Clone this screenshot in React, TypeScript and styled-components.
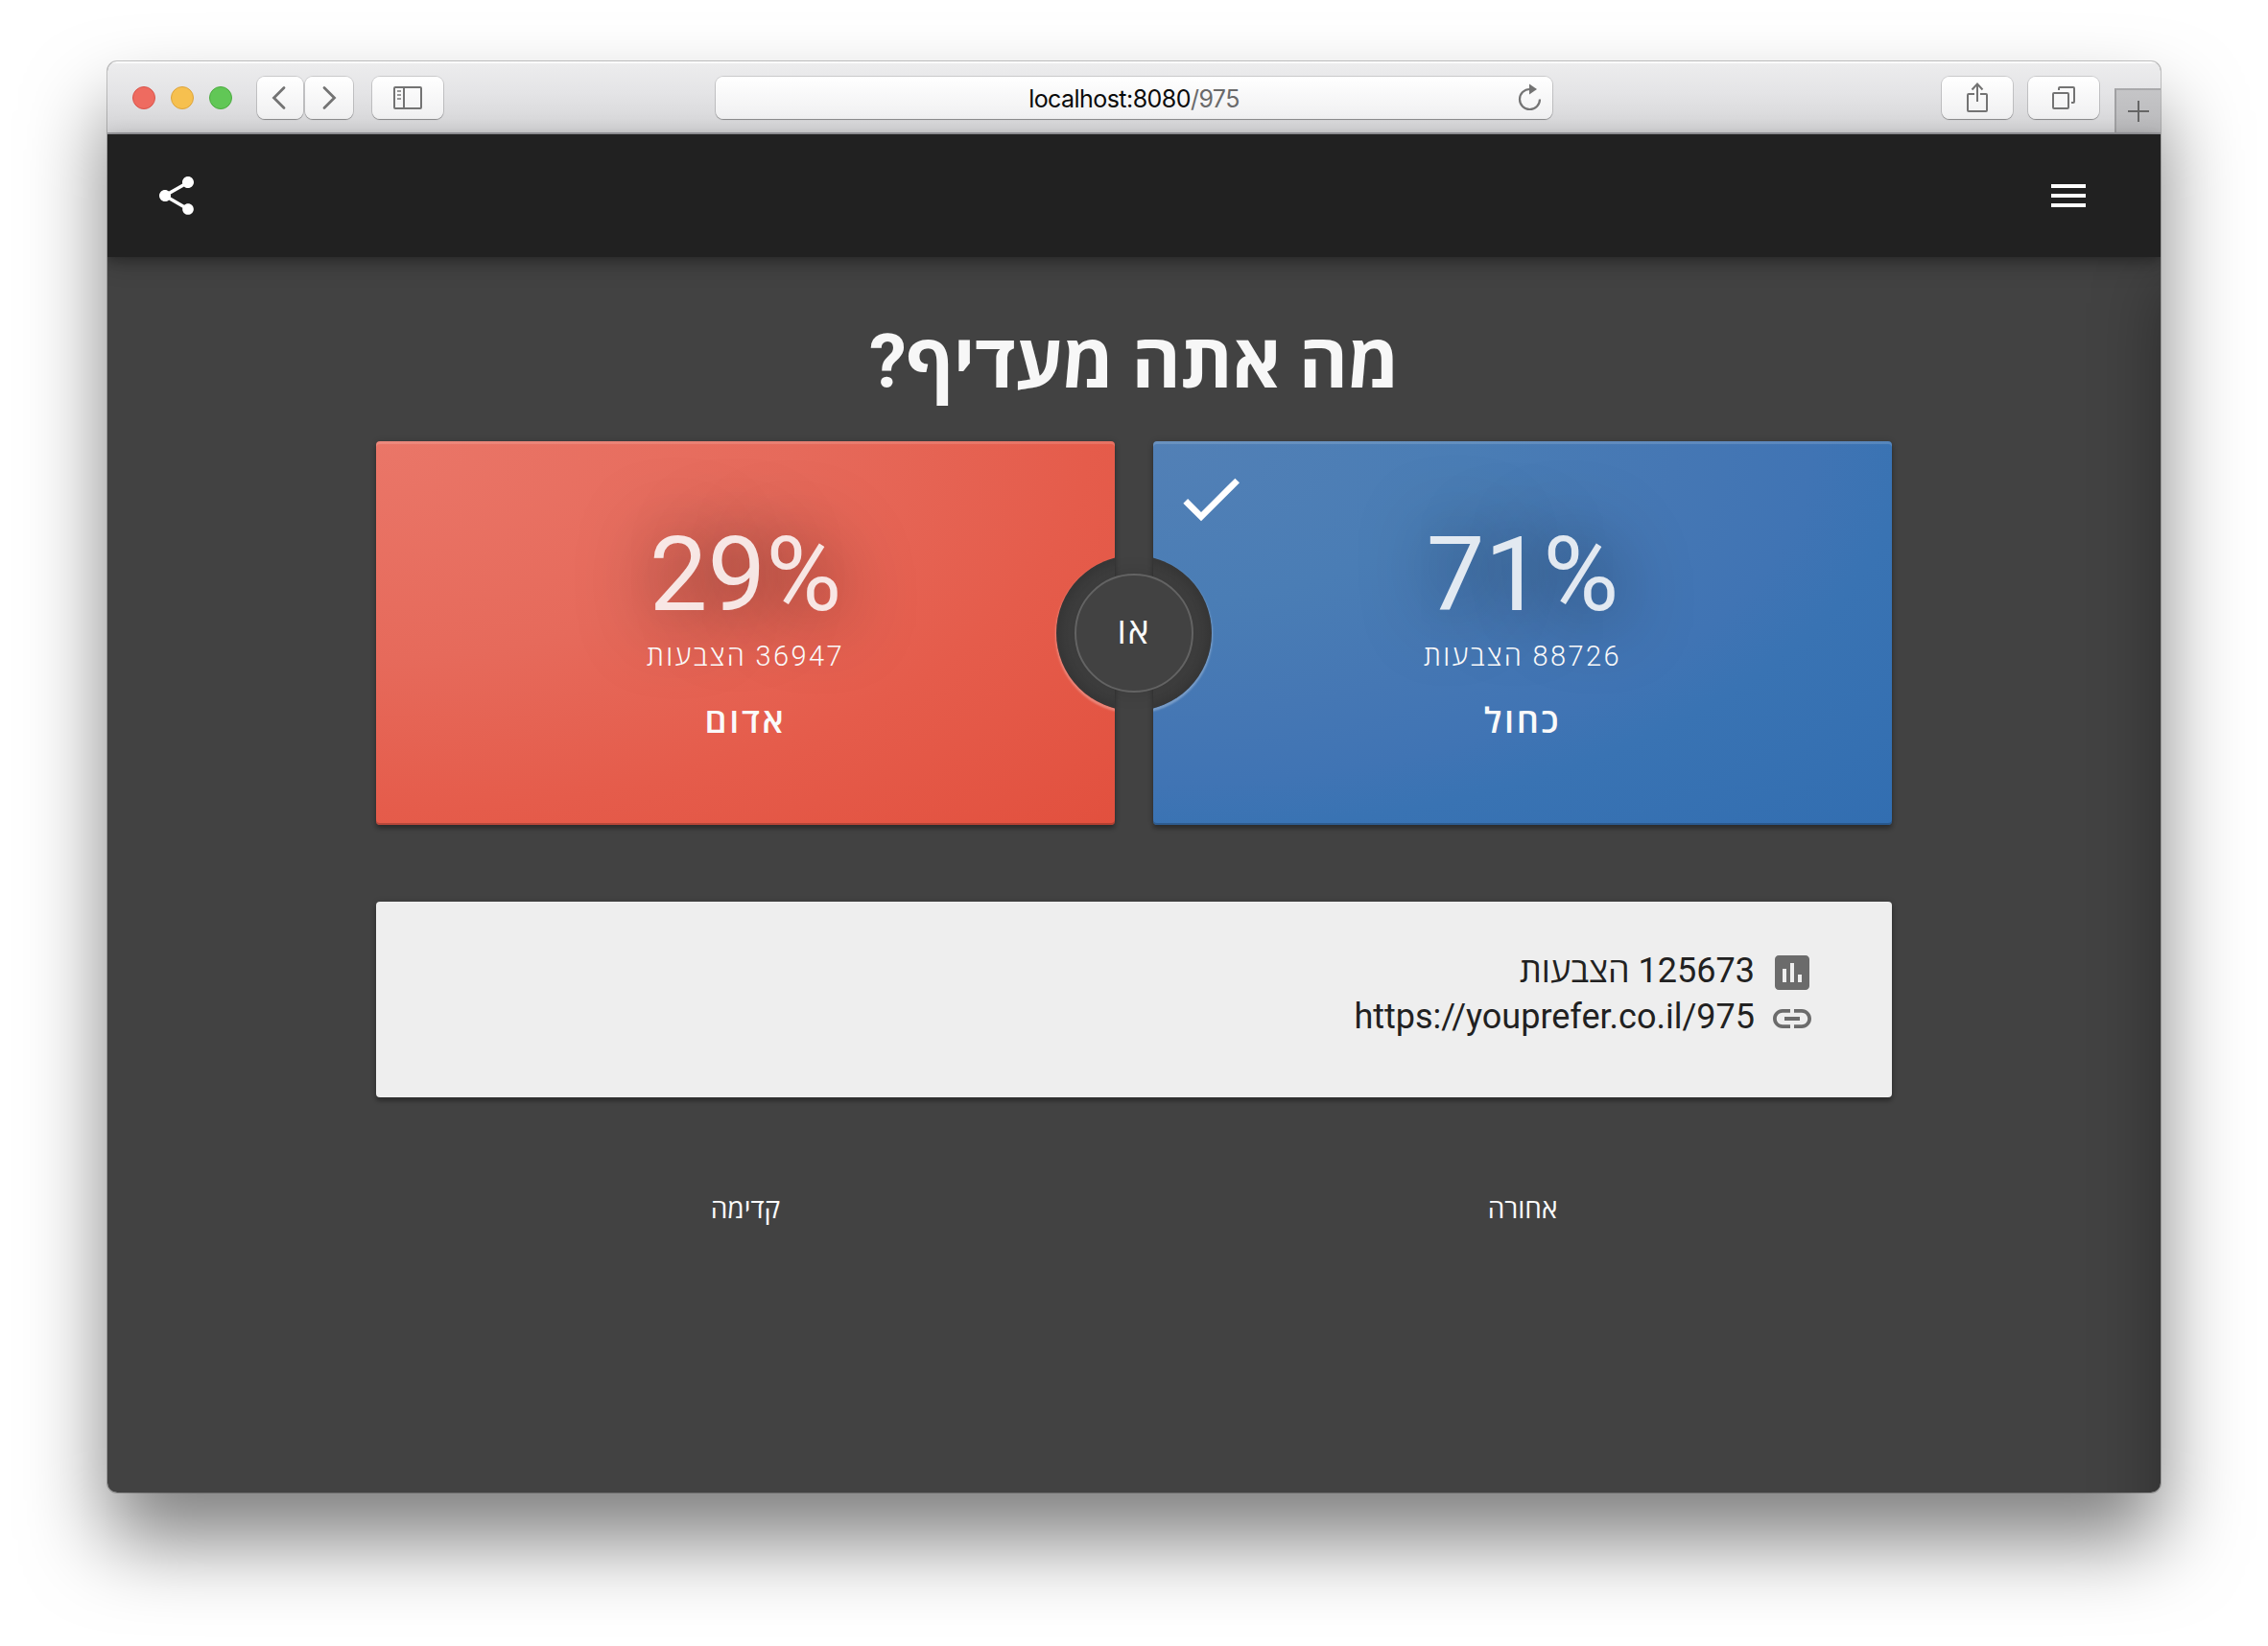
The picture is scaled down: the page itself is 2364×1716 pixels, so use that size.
import React from 'react';
import styled, { createGlobalStyle } from 'styled-components';
import { MdCheck, MdLink, MdMenu, MdPoll, MdShare } from 'react-icons/md';

const GlobalStyle = createGlobalStyle`
  html, body { margin: 0; padding: 0; background: #fff; }
  * { box-sizing: border-box; }
`;

const Desktop = styled.div`
  width: 2364px;
  height: 1716px;
  padding: 64px 112px 160px;
  overflow: hidden;
  background: #fff;
  font-family: Roboto, 'Open Sans', 'Liberation Sans', sans-serif;
`;

const Window = styled.div`
  width: 2140px;
  height: 1492px;
  border-radius: 10px;
  box-shadow: 0 0 0 1px rgba(0, 0, 0, 0.22), 0 50px 84px rgba(0, 0, 0, 0.5);
`;

const WindowBody = styled.div`
  position: relative;
  height: 100%;
  display: flex;
  flex-direction: column;
  border-radius: 10px;
  overflow: hidden;
  background: #424242;
`;

const Toolbar = styled.div`
  flex: none;
  height: 76px;
  display: flex;
  align-items: flex-start;
  padding-left: 26px;
  background: linear-gradient(#ededee, #e4e4e6 45%, #d4d4d6);
  border-bottom: 2px solid #9d9da1;
  box-shadow: inset 0 2px 1px rgba(255, 255, 255, 0.8);
`;

const Lights = styled.div`
  display: flex;
  gap: 16px;
  margin-top: 26px;
`;

const Light = styled.span<{ $fill: string; $edge: string }>`
  width: 24px;
  height: 24px;
  border-radius: 50%;
  background: ${(p) => p.$fill};
  border: 1px solid ${(p) => p.$edge};
`;

const ToolButton = styled.div<{ $width: number; $gap?: number }>`
  flex: none;
  width: ${(p) => p.$width}px;
  height: 44px;
  margin: 16px 0 0 ${(p) => p.$gap ?? 0}px;
  display: flex;
  align-items: center;
  justify-content: center;
  border-radius: 8px;
  background: linear-gradient(#fff, #f0f0f1);
  box-shadow: 0 0 0 1px rgba(0, 0, 0, 0.13), 0 1px 1px rgba(0, 0, 0, 0.28);
`;

const AddressBar = styled(ToolButton)`
  position: relative;
  padding-top: 2px;
  font-family: Inter, sans-serif;
  font-size: 25px;
  line-height: 42px;
  letter-spacing: -0.55px;
  color: #0a0a0a;
`;

const UrlPath = styled.span`
  color: #6a6a6a;
`;

const ReloadSlot = styled.div`
  position: absolute;
  right: 9px;
  top: 6px;
  height: 32px;

  svg { display: block; }
`;

const NewTab = styled.div`
  flex: none;
  width: 48px;
  height: 48px;
  margin: 28px 0 0 16px;
  display: flex;
  align-items: center;
  justify-content: center;
  background: linear-gradient(#c5c5c7, #b9b9bb);
  border-left: 2px solid #a0a0a2;
  border-top: 2px solid #a9a9ab;
  border-bottom: 2px solid #9d9da1;
`;

const AppBar = styled.header`
  flex: none;
  position: relative;
  z-index: 2;
  height: 128px;
  padding: 0 72px 0 48px;
  display: flex;
  align-items: center;
  justify-content: space-between;
  background: #212121;
  color: #fff;
  font-size: 48px;
  box-shadow: 0 4px 10px rgba(0, 0, 0, 0.22), 0 6px 24px rgba(0, 0, 0, 0.22);

  svg { display: block; }
`;

const Main = styled.main`
  flex: 1;
  direction: rtl;
  width: 1580px;
  margin: 0 auto;
  padding-top: 52px;
  color: #fafafa;
`;

const Drawer = styled.aside`
  position: absolute;
  top: 230px;
  right: -200px;
  bottom: -100px;
  width: 200px;
  box-shadow: 0 0 64px rgba(0, 0, 0, 0.34);
`;

const Title = styled.h1`
  height: 140px;
  margin: 0;
  padding-top: 2px;
  font-size: 78px;
  font-weight: 700;
  line-height: 112px;
  letter-spacing: -0.4px;
  text-align: center;
  white-space: nowrap;
  color: #f7f7f7;
`;

const Choices = styled.div`
  position: relative;
  display: grid;
  grid-template-columns: 1fr 1fr;
  gap: 40px;
`;

const Choice = styled.section<{ $stops: string; $side: 'left' | 'right' }>`
  position: relative;
  height: 400px;
  padding-top: 84px;
  display: flex;
  flex-direction: column;
  align-items: center;
  overflow: hidden;
  border-radius: 4px;
  background: radial-gradient(ellipse farthest-corner at 0 0, ${(p) => p.$stops});

  &::before {
    content: '';
    position: absolute;
    inset: 0;
    border-radius: 4px;
    box-shadow: inset 0 3px 0 rgba(255, 255, 255, 0.14), inset 0 -2px 0 rgba(0, 0, 0, 0.2);
  }

  &::after {
    content: '';
    position: absolute;
    top: 119px;
    ${(p) => p.$side}: -101px;
    width: 162px;
    height: 162px;
    border-radius: 50%;
    background: radial-gradient(circle, #3f3f3f 66px, #363636 81px);
    box-shadow: 0 2px 2px 1px rgba(255, 255, 255, 0.28);
  }
`;

const CardShadow = styled.div`
  border-radius: 4px;
  box-shadow: 0 4px 4px rgba(0, 0, 0, 0.28), 0 0 6px rgba(0, 0, 0, 0.14);
`;

const Percent = styled.div`
  height: 110px;
  font-size: 108px;
  line-height: 110px;
  color: rgba(255, 255, 255, 0.85);
  text-shadow: 0 4px 80px rgba(0, 0, 0, 0.8);
`;

const Votes = styled.div`
  height: 40px;
  margin-top: 10px;
  font-size: 29px;
  font-weight: 300;
  line-height: 40px;
  letter-spacing: 2.4px;
  white-space: nowrap;
`;

const Label = styled.div`
  height: 50px;
  margin-top: 23px;
  font-size: 36px;
  font-weight: 600;
  line-height: 50px;
  letter-spacing: 2.7px;
`;

const CheckMark = styled(MdCheck)`
  position: absolute;
  left: 20px;
  top: 20px;
  font-size: 80px;
  color: #fff;
`;

const OrBadge = styled.div`
  position: absolute;
  left: 728px;
  top: 138px;
  width: 124px;
  height: 124px;
  border: 2px solid #636363;
  border-radius: 50%;
  background: #424242;
  box-shadow: 0 0 20px rgba(0, 0, 0, 0.12);
  font-size: 37px;
  line-height: 118px;
  letter-spacing: 2px;
  text-align: center;
`;

const Info = styled.section`
  height: 204px;
  margin-top: 80px;
  padding: 48px 80px 0 0;
  border-radius: 4px;
  background: #eee;
  color: #212121;
  box-shadow: 0 4px 4px rgba(0, 0, 0, 0.28), 0 0 6px rgba(0, 0, 0, 0.14);
`;

const InfoRow = styled.div`
  height: 48px;
  display: flex;
  align-items: center;
  gap: 15px;
  font-size: 36px;
  line-height: 48px;
  white-space: nowrap;

  svg { flex: none; font-size: 48px; color: #6b6b6b; position: relative; top: 2px; }
`;

const Pager = styled.nav`
  display: grid;
  grid-template-columns: 1fr 1fr;
  gap: 40px;
  margin-top: 97px;
  font-size: 28px;
  line-height: 40px;
  text-align: center;
`;

const choices = [
  {
    label: 'כחול', percent: '71%', votes: '88726 הצבעות', picked: true, side: 'left' as const,
    stops: '#5280b6, #4a7db5 30%, #4577b4 50%, #4074b4 63%, #3973b3 72%, #326eb1',
  },
  {
    label: 'אדום', percent: '29%', votes: '36947 הצבעות', picked: false, side: 'right' as const,
    stops: '#ea7668, #e66a5b 40%, #e55c4b 68%, #e2503e',
  },
];

const Glyph = ({ w, h, children }: { w: number; h: number; children: React.ReactNode }) => (
  <svg width={w} height={h} viewBox={`0 0 ${w} ${h}`} fill="none" stroke="#737373" strokeWidth="2">
    {children}
  </svg>
);

export default function App() {
  return (
    <Desktop>
      <GlobalStyle />
      <Window>
        <WindowBody>
          <Toolbar>
            <Lights>
              <Light $fill="#ee6b60" $edge="#d9534a" />
              <Light $fill="#f6c04f" $edge="#dda43c" />
              <Light $fill="#61c756" $edge="#4cab40" />
            </Lights>
            <ToolButton $width={48} $gap={26}>
              <Glyph w={18} h={26}><path d="M13 2.500 2.500 13 13 23.500" strokeWidth="2.8" strokeLinecap="round" /></Glyph>
            </ToolButton>
            <ToolButton $width={50} $gap={2}>
              <Glyph w={16} h={26}><path d="M3 2.500 13.500 13 3 23.500" strokeWidth="2.8" strokeLinecap="round" /></Glyph>
            </ToolButton>
            <ToolButton $width={74} $gap={20}>
              <Glyph w={30} h={24}>
                <rect x="1" y="1" width="28" height="22" rx="1" />
                <path d="M11 1v22" />
                <path d="M4 5h4M4 9h4M4 13h4" stroke="#999" />
              </Glyph>
            </ToolButton>
            <AddressBar $width={872} $gap={284}>
              <span>localhost:8080<UrlPath>/975</UrlPath></span>
              <ReloadSlot>
                <Glyph w={28} h={32}>
                  <path d="M24 17.500A10.500 10.500 0 1 1 13.500 7" strokeWidth="2.2" />
                  <path d="M13 1.500 21 7l-8 5.500z" fill="#737373" stroke="none" />
                </Glyph>
              </ReloadSlot>
            </AddressBar>
            <ToolButton $width={74} $gap={406}>
              <Glyph w={24} h={34}>
                <path d="M9 13H3a1 1 0 0 0-1 1v16a1 1 0 0 0 1 1h18a1 1 0 0 0 1-1V14a1 1 0 0 0-1-1h-6" />
                <path d="M12 21V3M6.500 8.500 12 2.500l5.500 6" />
              </Glyph>
            </ToolButton>
            <ToolButton $width={74} $gap={16}>
              <Glyph w={26} h={26}>
                <rect x="2" y="8" width="16" height="16" rx="1" />
                <path d="M8 5V3a1 1 0 0 1 1-1h14a1 1 0 0 1 1 1v14a1 1 0 0 1-1 1h-2" />
              </Glyph>
            </ToolButton>
            <NewTab>
              <Glyph w={22} h={22}><path d="M11 0v22M0 11h22" stroke="#666" /></Glyph>
            </NewTab>
          </Toolbar>
          <AppBar>
            <MdShare />
            <MdMenu />
          </AppBar>
          <Main>
            <Title>מה אתה מעדיף?</Title>
            <Choices>
              {choices.map((c) => (
                <CardShadow key={c.label}>
                  <Choice $stops={c.stops} $side={c.side}>
                    {c.picked && <CheckMark />}
                    <Percent>{c.percent}</Percent>
                    <Votes>{c.votes}</Votes>
                    <Label>{c.label}</Label>
                  </Choice>
                </CardShadow>
              ))}
              <OrBadge>או</OrBadge>
            </Choices>
            <Info>
              <InfoRow><MdPoll /><span>125673 הצבעות</span></InfoRow>
              <InfoRow><MdLink /><span dir="ltr">https://youprefer.co.il/975</span></InfoRow>
            </Info>
            <Pager>
              <span>אחורה</span>
              <span>קדימה</span>
            </Pager>
          </Main>
          <Drawer />
        </WindowBody>
      </Window>
    </Desktop>
  );
}
